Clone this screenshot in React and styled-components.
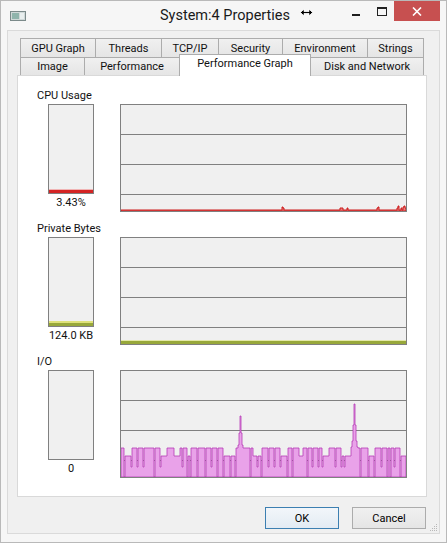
import React from 'react';
import styled, { createGlobalStyle } from 'styled-components';

const FONT = `Roboto, "Noto Sans", sans-serif`;

const GlobalStyle = createGlobalStyle`
  html, body { margin: 0; padding: 0; background: #fff; }
  body { font-family: ${FONT}; }
  * { box-sizing: border-box; }
`;

// --- graph data -----------------------------------------------------------

const GW = 285;
const GH = 106;

function rng(seed) {
  let s = seed;
  return () => {
    s = (s * 1664525 + 1013904223) % 4294967296;
    return s / 4294967296;
  };
}

function stepPath(v) {
  let d = `M0,${GH}`;
  v.forEach((y, x) => {
    d += ` L${x},${y} L${x + 1},${y}`;
  });
  return d + ` L${v.length},${GH} Z`;
}

const ioValues = (() => {
  const r = rng(11);
  const v = [];
  while (v.length < GW) {
    const w = 2 + Math.floor(r() * 6);
    const y = r() < 0.6 ? 77 : 85;
    for (let i = 0; i < w; i++) v.push(y);
    if (r() < 0.7) v.push(r() < 0.5 ? GH : 96);
  }
  v.length = GW;
  const spike = (c, shape) =>
    shape.forEach((h, i) => {
      const a = c - i;
      const b = c + i;
      if (v[a] !== undefined) v[a] = Math.min(v[a], h);
      if (v[b] !== undefined) v[b] = Math.min(v[b], h);
    });
  spike(119, [45, 62, 74, 78]);
  spike(233, [33, 54, 70, 76]);
  return v;
})();

const cpuValues = (() => {
  const v = new Array(GW).fill(105);
  const bumps = { 161: 102, 162: 103, 219: 103, 220: 103, 221: 103, 226: 103, 256: 103, 257: 102, 276: 103, 277: 101, 280: 103, 282: 102, 283: 101, 284: 103 };
  Object.entries(bumps).forEach(([x, y]) => (v[x] = y));
  return v;
})();

// --- window chrome --------------------------------------------------------

const Window = styled.div`
  position: relative;
  width: 447px;
  height: 543px;
  border: 1px solid #b9b9b9;
  background: #f6f6f6;
  display: flex;
  flex-direction: column;
  padding: 0 6px 8px 6px;
  font-family: ${FONT};
  color: #000;
`;

const TitleBar = styled.div`
  height: 29px;
  display: flex;
  align-items: flex-start;
`;

const AppIcon = styled.div`
  flex: 1;
  padding: 10px 0 0 3px;
  svg { display: block; }
`;

const Title = styled.div`
  font-size: 14.5px;
  line-height: 29px;
  color: #1a1a1a;
  white-space: nowrap;
`;

const Controls = styled.div`
  flex: 1;
  display: flex;
  justify-content: flex-end;
`;

const CtlButton = styled.div`
  width: ${p => p.w}px;
  height: 20px;
  display: flex;
  align-items: center;
  justify-content: center;
  background: ${p => (p.close ? '#c75050' : 'transparent')};
  svg { display: block; }
`;

const MinBar = styled.span`
  display: block;
  width: 8px;
  height: 2px;
  margin-top: 7px;
  background: #1e1e1e;
`;

const Cursor = styled.div`
  position: absolute;
  left: 299px;
  top: 7px;
  svg { display: block; }
`;

const Client = styled.div`
  position: relative;
  flex: 1;
  border: 1px solid #dadada;
  background: #f0f0f0;
  display: flex;
  flex-direction: column;
  padding: 7px 12px 3px 9px;
`;

// --- tabs -----------------------------------------------------------------

const TabStrip = styled.div`
  display: flex;
  flex-direction: column;
  padding: 0 2px 0 3px;
`;

const TabRow = styled.div`
  display: flex;
  align-items: flex-end;
  height: ${p => p.h}px;
`;

const Tab = styled.div`
  position: relative;
  z-index: ${p => (p.selected ? 2 : 1)};
  width: ${p => p.w}px;
  height: ${p => (p.selected ? 22 : p.h)}px;
  margin-left: -1px;
  margin-bottom: ${p => (p.selected ? -1 : 0)}px;
  &:first-child { margin-left: 0; }
  border: 1px solid #acacac;
  border-bottom: none;
  background: ${p => (p.selected ? '#fff' : 'linear-gradient(#f0f0f0, #e5e5e5)')};
  font-size: 11px;
  line-height: ${p => (p.selected ? 17 : p.h)}px;
  text-align: center;
  white-space: nowrap;
  color: #111;
`;

const Panel = styled.div`
  position: relative;
  z-index: 1;
  height: 422px;
  border: 1px solid #d9d9d9;
  background: #fff;
  padding: 12px 0 0 19px;
  display: flex;
  flex-direction: column;
  gap: 9px;
`;

// --- graph sections -------------------------------------------------------

const Section = styled.div`
  display: flex;
  flex-direction: column;
`;

const SectionLabel = styled.div`
  font-size: 11px;
  line-height: 16px;
  height: 16px;
  color: #111;
`;

const SectionBody = styled.div`
  display: flex;
  align-items: flex-start;
  gap: 26px;
  padding-left: 11px;
`;

const MeterColumn = styled.div`
  width: 46px;
  display: flex;
  flex-direction: column;
  align-items: center;
`;

const Meter = styled.div`
  width: 46px;
  height: 90px;
  border: 1px solid #808080;
  background: #f0f0f0;
  display: flex;
  flex-direction: column;
  justify-content: flex-end;
`;

const MeterBar = styled.div`
  height: ${p => p.h}px;
  background: ${p => p.color};
  border-top: ${p => p.edge}px solid ${p => p.light};
`;

const MeterValue = styled.div`
  font-size: 11px;
  line-height: 18px;
  white-space: nowrap;
  text-align: center;
  color: #111;
`;

const Graph = styled.div`
  width: 287px;
  height: 108px;
  border: 1px solid #808080;
  background: #f0f0f0;
  svg { display: block; width: 100%; height: 100%; }
`;

// --- buttons --------------------------------------------------------------

const ButtonRow = styled.div`
  display: flex;
  justify-content: flex-end;
  gap: 13px;
  margin-top: 10px;
  padding-right: 1px;
`;

const Button = styled.button`
  width: 74px;
  height: 22px;
  padding: 0;
  border: 1px solid ${p => (p.primary ? '#3c7fb1' : '#acacac')};
  background: ${p => (p.primary ? 'linear-gradient(#f2f6fa, #e3ebf3)' : 'linear-gradient(#f0f0f0, #e5e5e5)')};
  font-family: ${FONT};
  font-size: 11px;
  color: #000;
`;

const Grip = styled.div`
  position: absolute;
  right: 1px;
  bottom: 1px;
  svg { display: block; }
`;

function GridLines() {
  return (
    <g stroke="#808080" strokeWidth="1" shapeRendering="crispEdges">
      <line x1="0" x2={GW} y1="29.5" y2="29.5" />
      <line x1="0" x2={GW} y1="59.5" y2="59.5" />
      <line x1="0" x2={GW} y1="89.5" y2="89.5" />
    </g>
  );
}

function CpuGraph() {
  return (
    <Graph>
      <svg viewBox={`0 0 ${GW} ${GH}`} preserveAspectRatio="none">
        <GridLines />
        <path d={stepPath(cpuValues)} fill="#e88080" stroke="#cc1a1a" strokeWidth="1" />
      </svg>
    </Graph>
  );
}

function BytesGraph() {
  return (
    <Graph>
      <svg viewBox={`0 0 ${GW} ${GH}`} preserveAspectRatio="none">
        <GridLines />
        <rect x="0" y="102" width={GW} height="1" fill="#e3e8a8" />
        <rect x="0" y="103" width={GW} height="3" fill="#98a83a" />
      </svg>
    </Graph>
  );
}

function IoGraph() {
  return (
    <Graph>
      <svg viewBox={`0 0 ${GW} ${GH}`} preserveAspectRatio="none">
        <GridLines />
        <path d={stepPath(ioValues)} fill="#e9a2e9" stroke="#b53ab5" strokeWidth="0.8" />
      </svg>
    </Graph>
  );
}

const row1 = [
  ['GPU Graph', 76],
  ['Threads', 67],
  ['TCP/IP', 58],
  ['Security', 65],
  ['Environment', 86],
  ['Strings', 57],
];

const row2 = [
  ['Image', 65],
  ['Performance', 96],
  ['Performance Graph', 132, true],
  ['Disk and Network', 114],
];

export default function App() {
  return (
    <>
      <GlobalStyle />
      <Window>
        <TitleBar>
          <AppIcon>
            <svg width="16" height="10" viewBox="0 0 16 10">
              <rect x="0.5" y="0.5" width="15" height="9" fill="#cfd8d8" stroke="#7b8a8a" />
              <rect x="2" y="2" width="7" height="6" fill="#8fb4ac" />
              <rect x="10" y="2" width="4" height="6" fill="#e8eeee" />
            </svg>
          </AppIcon>
          <Title>System:4 Properties</Title>
          <Controls>
            <CtlButton w={26}>
              <MinBar />
            </CtlButton>
            <CtlButton w={25}>
              <svg width="10" height="9" viewBox="0 0 10 9">
                <rect x="0.5" y="1" width="9" height="7.5" fill="none" stroke="#222" strokeWidth="1" />
                <rect x="0" y="0" width="10" height="2" fill="#222" />
              </svg>
            </CtlButton>
            <CtlButton w={46} close>
              <svg width="10" height="9" viewBox="0 0 10 9">
                <path d="M1 0.5 L9 8.5 M9 0.5 L1 8.5" stroke="#fff" strokeWidth="1.6" />
              </svg>
            </CtlButton>
          </Controls>
        </TitleBar>

        <Client>
          <TabStrip>
            <TabRow h={19}>
              {row1.map(([t, w]) => (
                <Tab key={t} w={w} h={19}>{t}</Tab>
              ))}
            </TabRow>
            <TabRow h={18}>
              {row2.map(([t, w, sel]) => (
                <Tab key={t} w={w} h={18} selected={sel}>{t}</Tab>
              ))}
            </TabRow>
          </TabStrip>

          <Panel>
            <Section>
              <SectionLabel>CPU Usage</SectionLabel>
              <SectionBody>
                <MeterColumn>
                  <Meter>
                    <MeterBar h={4} color="#d42424" light="#f0b4b4" edge={1} />
                  </Meter>
                  <MeterValue>3.43%</MeterValue>
                </MeterColumn>
                <CpuGraph />
              </SectionBody>
            </Section>

            <Section>
              <SectionLabel>Private Bytes</SectionLabel>
              <SectionBody>
                <MeterColumn>
                  <Meter>
                    <MeterBar h={5} color="#98a83a" light="#dfe27a" edge={2} />
                  </Meter>
                  <MeterValue>124.0 KB</MeterValue>
                </MeterColumn>
                <BytesGraph />
              </SectionBody>
            </Section>

            <Section>
              <SectionLabel>I/O</SectionLabel>
              <SectionBody>
                <MeterColumn>
                  <Meter />
                  <MeterValue>0</MeterValue>
                </MeterColumn>
                <IoGraph />
              </SectionBody>
            </Section>
          </Panel>

          <ButtonRow>
            <Button primary>OK</Button>
            <Button>Cancel</Button>
          </ButtonRow>

          <Grip>
            <svg width="9" height="9" viewBox="0 0 9 9" fill="#b8b8b8">
              <rect x="7" y="1" width="1" height="1" />
              <rect x="5" y="3" width="1" height="1" />
              <rect x="7" y="3" width="1" height="1" />
              <rect x="3" y="5" width="1" height="1" />
              <rect x="5" y="5" width="1" height="1" />
              <rect x="7" y="5" width="1" height="1" />
              <rect x="1" y="7" width="1" height="1" />
              <rect x="3" y="7" width="1" height="1" />
              <rect x="5" y="7" width="1" height="1" />
              <rect x="7" y="7" width="1" height="1" />
            </svg>
          </Grip>
        </Client>

        <Cursor>
          <svg width="13" height="9" viewBox="0 0 13 9">
            <path d="M0.5 4.5 L4 1 L4 3.5 L9 3.5 L9 1 L12.5 4.5 L9 8 L9 5.5 L4 5.5 L4 8 Z" fill="#000" stroke="#fff" strokeWidth="0.8" />
          </svg>
        </Cursor>
      </Window>
    </>
  );
}
